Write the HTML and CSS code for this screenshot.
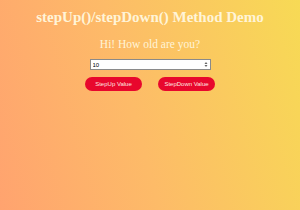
FILE: index.html
```html
<!DOCTYPE html>
<html lang="en">
<head>
    <meta charset="UTF-8">
    <meta name="viewport" content="width=device-width, initial-scale=1.0">
    <title>stepUp()/stepDown() Method Demo</title>
    <link rel="stylesheet" href="styles.css">
</head>
<body>
    <div class="wrap">
        <h1>stepUp()/stepDown() Method Demo</h1>
        <h2>Hi! How old are you?</h2>
        <div class="field">
            <div class="num">
                <input type="number" id="age" value="10">
                <svg class="spin" width="4" height="7" viewBox="0 0 4 7">
                    <path d="M0.5 3 L2 1 L3.5 3 Z M0.5 4 L2 6 L3.5 4 Z" fill="#666"/>
                </svg>
            </div>
        </div>
        <div class="buttons">
            <button class="btn" onclick="document.getElementById('age').stepUp()">StepUp Value</button>
            <button class="btn" onclick="document.getElementById('age').stepDown()">StepDown Value</button>
        </div>
    </div>
</body>
</html>
```

FILE: styles.css
```css
html, body {
    height: 100%;
}
body {
    margin: 0;
    font-family: 'Liberation Serif', serif;
    background: linear-gradient(75deg, #ffa36f 0%, #fdbb68 45%, #f7da55 100%);
    color: #fff4d8;
    text-align: center;
}
.wrap {
    padding-top: 8px;
}
h1 {
    font-size: 15px;
    margin: 0;
    line-height: 18px;
}
h2 {
    font-weight: normal;
    font-size: 11.5px;
    margin: 11px 0 0;
    line-height: 14px;
}
.field {
    display: flex;
    justify-content: center;
    margin-top: 8px;
}
.num {
    position: relative;
    display: flex;
}
input {
    width: 121px;
    height: 11px;
    box-sizing: border-box;
    font-family: 'Liberation Sans', sans-serif;
    font-size: 6px;
    padding: 0 2px;
    border: 1px solid #8a8a8a;
    background: #fff;
    color: #000;
}
input::-webkit-inner-spin-button,
input::-webkit-outer-spin-button {
    -webkit-appearance: none;
    margin: 0;
}
.spin {
    position: absolute;
    right: 3px;
    top: 2px;
}
.buttons {
    display: flex;
    justify-content: center;
    gap: 16px;
    margin-top: 7px;
}
.btn {
    width: 57px;
    height: 14px;
    border: none;
    border-radius: 7px;
    background: #e8072d;
    color: #fde6e0;
    font-family: 'Liberation Sans', sans-serif;
    font-size: 6px;
    padding: 0;
}
```
